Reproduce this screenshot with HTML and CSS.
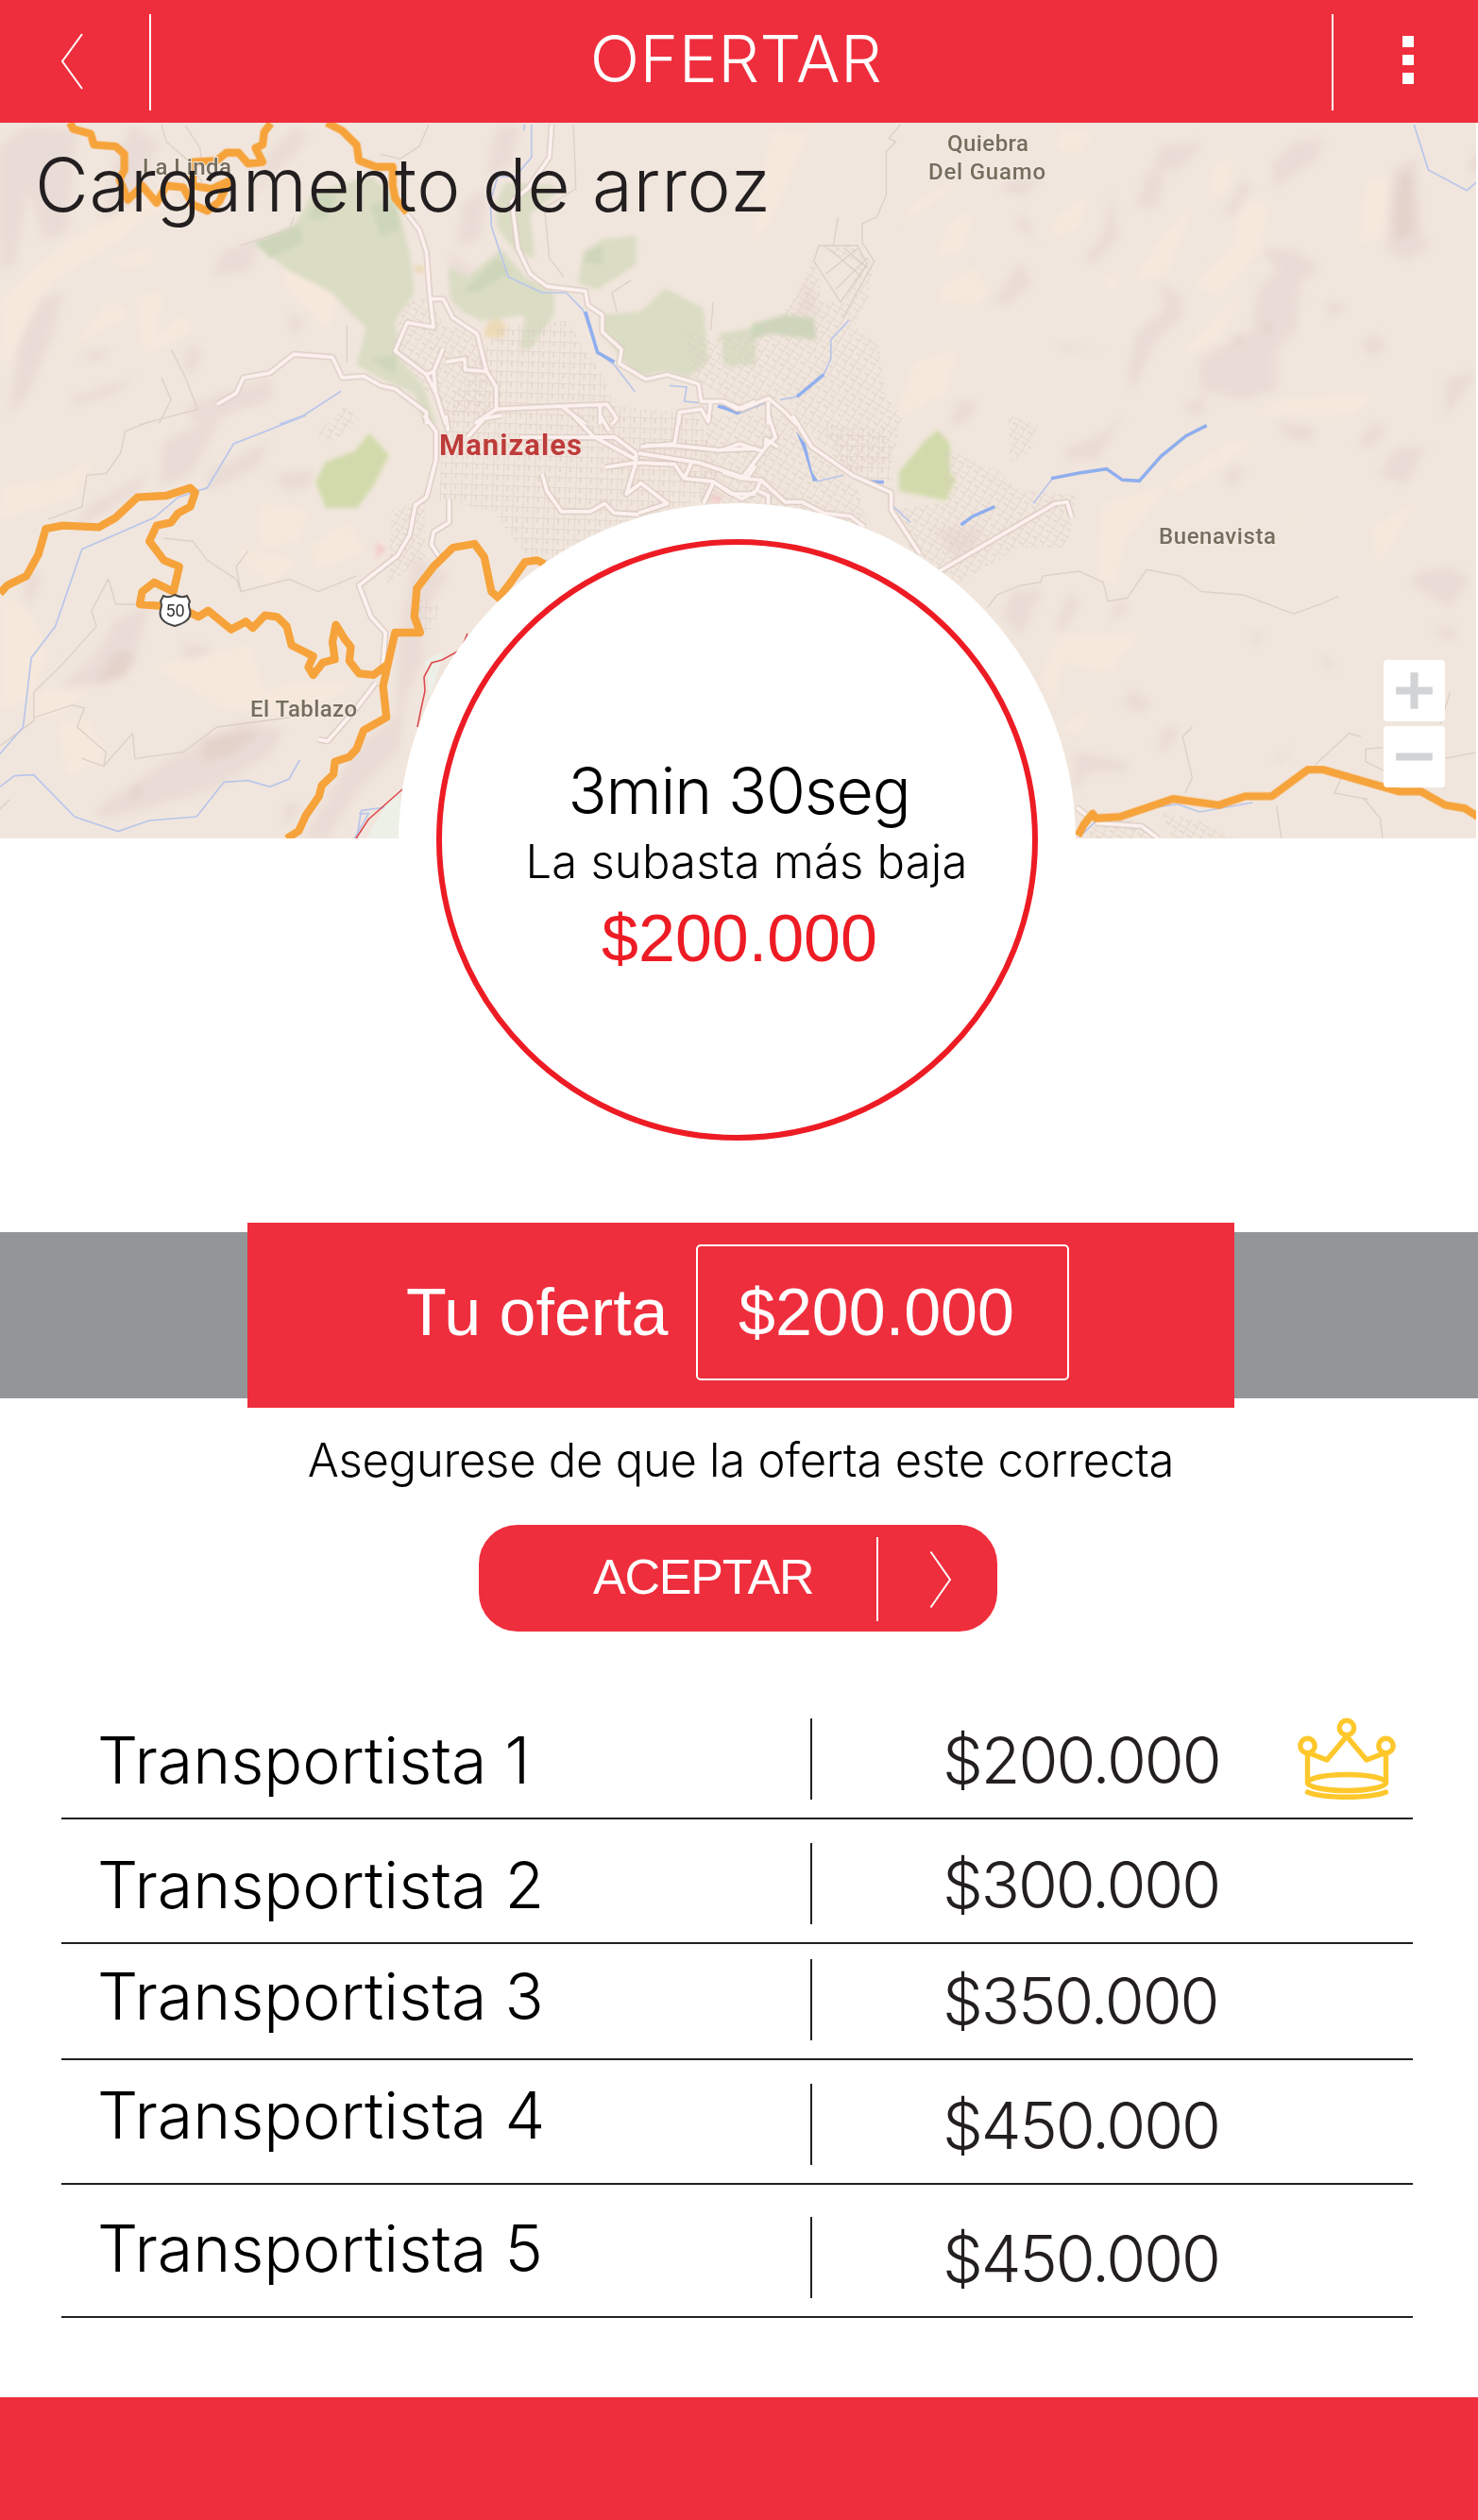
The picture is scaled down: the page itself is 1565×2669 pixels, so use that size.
FILE: index.html
```html
<!DOCTYPE html>
<html lang="es">
<head>
<meta charset="utf-8">
<title>Ofertar</title>
<link rel="stylesheet" href="styles.css">
</head>
<body>
<header class="topbar">
  <svg class="topbar-back" viewBox="0 0 26 62"><path d="M23 2 2 31 23 60"/></svg>
  <span class="topbar-rule"></span>
  <h1 class="topbar-title">OFERTAR</h1>
  <span class="topbar-rule"></span>
  <div class="topbar-menu"><i></i><i></i><i></i></div>
</header>

<section class="hero">
  <svg class="map" viewBox="0 130 1563 758" preserveAspectRatio="none">
    <defs>
      <pattern id="blocks" width="11" height="11" patternUnits="userSpaceOnUse" patternTransform="rotate(2)"><path d="M0 0H11M0 0V11M5 0V6" class="lane"/></pattern>
      <pattern id="lanes" width="9" height="13" patternUnits="userSpaceOnUse" patternTransform="rotate(32)"><path d="M0 0H9M0 0V13M4 6H9" class="lane"/></pattern>
      <filter id="soft" x="-20%" y="-20%" width="140%" height="140%"><feGaussianBlur stdDeviation="4"/></filter>
      <filter id="edge" x="-20%" y="-20%" width="140%" height="140%"><feGaussianBlur stdDeviation="2"/></filter>
    </defs>
    <rect y="130" width="1563" height="758" fill="#f1e6dd"/>
    <!-- terrain relief -->
    <g filter="url(#soft)">
      <g transform="scale(.5102 .33333)">
        <path class="rise" d="M0 460 60 400 160 420 140 740 90 760 60 600 30 850 0 850ZM80 950 130 930 110 1060 60 1250 20 1320 40 1080ZM270 400 330 450 250 740 210 740 230 560ZM620 400 640 440 540 600 520 640 560 480ZM460 800 540 760 520 860 440 880ZM150 1260 280 1200 240 1250 150 1290ZM390 1100 420 1110 400 1190 380 1170ZM160 1120 230 1110 200 1150ZM600 1000 630 1010 610 1080ZM390 1290 560 1200 570 1270 400 1350ZM960 650 1010 600 1000 760 950 780ZM1030 400 1080 400 1060 520 1010 560ZM930 800 980 860 960 1000Z"/>
        <path class="warm" d="M0 950 130 780 330 600 380 600 250 760 100 900 20 1150 0 1150ZM240 820 320 790 310 850 220 840ZM280 940 340 930 320 1080 380 1000 400 1050 300 1130ZM80 1180 180 1050 230 950 270 1000 150 1100ZM590 760 700 950 680 1050 590 900Z"/>
      </g>
      <g transform="translate(765) scale(.5102 .33333)">
        <path class="rise" d="M910 460 1000 455 950 540 890 545ZM880 545 920 560 900 660 860 660ZM1190 450 1250 440 1230 510 1180 560 1150 600 1140 520ZM1080 570 1100 590 1060 690 1040 680ZM810 610 820 760 770 840 750 820 790 740ZM620 670 650 760 610 720ZM620 830 640 900 590 970 560 960ZM1120 790 1190 795 1240 850 1200 900 1190 1050 1150 1110 1150 1240 1080 1270 990 1240 990 1140 1100 1050 1110 920 1150 860ZM910 900 950 940 955 1000 900 1080 850 1250 840 1190 860 1060 920 980ZM700 1090 790 1115 700 1110ZM1250 950 1300 980 1260 1010ZM1350 1055 1380 1100 1350 1140 1325 1100ZM1390 540 1440 500 1450 740 1470 780 1420 830 1380 800ZM1500 1200 1568 1180 1500 1330ZM490 1270 530 1280 500 1350 470 1350ZM180 880 200 1000 150 1000ZM960 1280 1000 1260 1000 1310 970 1320ZM590 570 660 560 630 620 580 610Z"/>
        <path class="peak" d="M1410 540 1430 560 1435 740 1400 765 1390 700ZM1060 1060 1085 1080 1065 1105ZM1130 1020 1145 1040 1120 1080ZM1568 470 1550 540 1568 540Z"/>
        <path class="warm" d="M700 410 770 420 740 490 690 470ZM370 690 430 610 500 570 440 640 380 700ZM480 690 520 680 500 800 440 815ZM690 690 760 620 740 720 690 760ZM920 740 980 640 920 880 850 890ZM1080 650 1130 640 1120 780 1030 950 980 900 1060 780ZM450 920 520 850 550 920 530 970 450 960ZM800 870 830 890 810 920 790 900ZM100 420 180 420 100 700 60 790ZM1340 560 1380 570 1370 740 1320 780ZM950 1120 1080 930 1030 1080 970 1120ZM400 1150 490 1110 460 1250 360 1330ZM1160 1270 1360 1250 1300 1320 1100 1320ZM1020 520 1060 500 1050 600 1010 640Z"/>
      </g>
      <g transform="translate(0 440) scale(.5102 .33333)">
        <path class="rise" d="M340 80 460 0 400 180 330 230ZM430 180 560 80 530 170 430 240ZM180 290 310 180 280 250 150 370ZM570 190 650 170 640 230 590 240ZM240 650 310 600 280 780 220 850 120 870 200 760ZM380 720 440 740 420 780 380 790ZM340 1100 510 970 590 1000 560 1080 440 1190 300 1250 210 1280 200 1250ZM860 450 930 500 880 640 880 770 840 900 830 1060 740 1200 680 1345 630 1345 740 1050 820 960 830 700ZM50 510 90 500 60 620ZM590 1230 630 1240 590 1310Z"/>
        <path class="peak" d="M240 750 280 760 260 830 200 850ZM420 1030 500 1000 540 1010 480 1080 420 1100ZM280 1170 300 1200 270 1230Z"/>
        <path class="warm" d="M0 230 120 200 200 140 150 260 0 330ZM540 280 640 300 620 400 540 420ZM480 420 620 460 560 540ZM320 800 520 730 550 900 430 900ZM90 870 190 870 110 960 60 950ZM420 920 620 850 740 850 620 960ZM0 560 60 620 100 760 60 900 0 940ZM120 980 180 960 220 1080 140 1150ZM640 420 720 340 760 430 660 490Z"/>
      </g>
      <g transform="translate(765 440) scale(.5102 .33333)">
        <path class="rise" d="M1150 20 1230 40 1220 90 1170 70ZM1350 20 1380 40 1340 110 1320 90ZM720 100 790 60 830 0 780 140 710 140ZM1060 160 1085 180 1060 225 1040 210ZM1400 100 1460 100 1420 220 1360 190ZM1440 500 1510 480 1550 520 1510 610 1430 540ZM1470 670 1530 680 1510 720ZM1100 680 1120 700 1100 735ZM1240 750 1270 790 1260 820ZM600 560 665 550 620 700 580 640ZM720 560 740 600 710 680 690 680ZM830 570 840 620 800 660ZM850 870 890 910 870 945 830 920ZM920 990 950 990 920 1080 900 1040ZM730 1070 840 1100 840 1130 760 1130 730 1200ZM1180 1060 1160 1100 1140 1100ZM440 360 540 350 520 440 480 450Z"/>
        <path class="warm" d="M790 280 930 220 830 400 820 540 780 520ZM700 700 870 690 800 820 700 780 690 930 660 830ZM1350 360 1440 270 1400 380 1360 480ZM930 210 1060 80 1100 90 940 250ZM700 1000 770 920 740 1010ZM1180 270 1200 360 1190 370Z"/>
      </g>
    </g>
    <!-- parks -->
    <g filter="url(#edge)">
      <g transform="scale(.5102 .33333)">
        <path class="park" d="M525 770 610 720 650 610 770 560 820 620 850 800 860 930 820 1020 830 1140 880 1230 905 1345 880 1345 860 1250 800 1210 740 1160 760 1040 730 1000 690 930 600 860ZM930 850 970 880 1040 790 1090 880 1150 930 1150 1000 1100 1110 1080 1110 1090 1000 1000 1020 960 990 935 950ZM1030 640 1050 580 1150 590 1150 620 1100 680 1110 820 1070 800 1030 720ZM1210 800 1250 760 1320 750 1320 840 1240 920 1200 900ZM1250 1000 1330 990 1380 915 1460 980 1470 1150 1430 1200 1380 1180 1320 1200 1280 1120 1250 1060ZM1490 1060 1568 1040 1568 1160 1520 1160Z"/>
        <path class="park-deep" d="M530 770 620 710 630 770 560 820ZM640 700 660 610 700 620 680 690ZM770 650 820 640 830 730 790 750ZM960 930 1030 820 1060 860 1000 920ZM1220 800 1250 780 1250 840 1210 830ZM770 1140 820 1130 820 1190Z"/>
        <path fill="#ecd9b6" d="M1010 1030 1030 1010 1050 1030 1045 1075 1005 1070ZM860 845 880 845 880 865 860 865Z"/>
      </g>
      <g transform="translate(765) scale(.5102 .33333)">
        <path class="park" d="M0 1060 30 1090 60 1090 50 1140 20 1170 0 1150Z"/>
        <path class="park-deep" d="M60 1030 130 1000 190 1010 195 1080 100 1060 60 1080Z"/>
      </g>
      <path class="park-bright" d="M391 459 412 482 395 515 378 538 345 538 334 510 345 489 375 478ZM952 500 978 468 993 455 1006 470 1006 500 1012 508 1002 530 952 520Z"/>
      <path fill="#f4cfca" d="M398 574 410 582 398 592ZM757 522 766 526 760 534 750 530Z"/>
    </g>
    <!-- city street mesh -->
    <path fill="url(#lanes)" d="M428 320 455 315 470 345 500 350 515 390 520 440 470 440 440 400 415 370ZM725 350 750 360 800 352 835 325 850 300 865 260 905 260 925 280 918 320 905 345 930 365 938 420 955 440 945 490 900 500 850 450 830 420 790 440 735 400ZM862 260 870 320 895 320 910 280ZM335 460 365 430 380 445 350 470ZM1068 440 1100 450 1090 480 1070 490ZM940 540 1090 520 1140 525 1130 580 1080 580 1010 620 975 600ZM1000 475 1060 500 1080 520 1000 545ZM750 440 830 440 910 520 920 570 880 560 740 530ZM1230 860 1270 870 1310 888 1240 888ZM1160 870 1200 868 1225 888 1150 888ZM415 540 450 530 450 590 410 620Z"/>
    <path fill="url(#blocks)" d="M470 440 530 345 600 340 640 400 650 430 740 440 760 500 740 530 640 560 580 600 560 590 520 540 465 530ZM870 450 940 455 945 510 900 505ZM440 635 465 640 460 665 445 670Z"/>
    <g class="trail">
      <path transform="scale(.5102 .33333)" d="M335 395 345 450 390 510 420 580M385 400 415 470 420 530M890 395 870 465 830 505 790 490M500 780 600 730 610 690M1190 395 1195 600 1130 660 1140 820 1170 880M355 1110 385 1200 410 1300 290 1350M720 1035 720 1150M335 1200 355 1270 330 1345M1310 890 1270 930 1280 990M1480 960 1475 1050"/>
      <path transform="translate(765) scale(.5102 .33333)" d="M370 395 345 440 360 450 340 480 340 620 320 690 290 710 290 770 315 830 250 1010M240 690 230 780M200 780 280 780 300 840 245 960 190 830ZM220 790 290 880M250 785 300 850M280 790 215 870M300 820 235 920"/>
      <path transform="translate(0 440) scale(.5102 .33333)" d="M310 20 260 50 250 120 220 185 180 190 170 290 100 330M340 390 400 400 430 460 490 520 500 560 600 520 660 560 740 510M515 430 490 480 500 560M225 520 240 600 330 600M225 520 190 620 200 670 130 790 70 880 70 970 0 1050M70 960 150 920 175 930 160 990 220 1070 215 1115 170 1090M215 1115 275 1010 280 1090 380 1070 450 990 600 960M0 1250 20 1220"/>
      <path transform="translate(765 440) scale(.5102 .33333)" d="M550 610 570 570 620 540 660 530 665 510 740 495 790 530 800 590 840 580 880 490 950 510 995 560 1080 570 1185 630 1240 600 1278 575M975 990 955 1020 975 1150 960 1200M1230 1110 1300 1010 1325 1020M1370 1055 1335 1060 1335 1100 1400 1150M1500 1090 1568 1070M1150 1240 1160 1345M1330 1215 1365 1280 1370 1345M1285 1150 1270 1200 1340 1220M1510 880 1490 980"/>
    </g>
    <g class="creek">
      <path transform="scale(.5102 .33333)" d="M1103 395 1103 500 1070 560 1033 560 1018 640 1020 720 1055 880 1125 930 1175 930 1210 985 1240 1120 1275 1160 1318 1245M1088 395V415M708 1243 630 1320 580 1348M1390 1225 1425 1230 1420 1275 1450 1280"/>
      <path transform="translate(765) scale(.5102 .33333)" d="M262 1018 225 1080 225 1140 210 1190 155 1260 120 1270M1435 395 1465 540 1545 605 1568 575"/>
      <path transform="translate(0 440) scale(.5102 .33333)" d="M635 0 485 90 430 230 370 260 320 325 170 425 115 670 65 770 48 990 0 1075M0 1180 30 1145 70 1142 155 1275 245 1322 310 1287 408 1275 465 1165 515 1160 560 1180 600 1155 622 1095M830 1240 750 1255 740 1345M745 1265 765 1265 735 1345"/>
      <path transform="translate(765 440) scale(.5102 .33333)" d="M645 280 685 200M355 290 390 340M195 210 250 190M900 1245 945 1235 990 1260 1100 1230M740 1340 775 1290"/>
    </g>
    <g class="river">
      <path transform="scale(.5102 .33333)" d="M1215 990 1240 1120 1275 1150M1490 1290 1530 1310 1568 1275"/>
      <path transform="translate(765) scale(.5102 .33333)" d="M0 1290 30 1312 90 1275M210 1190 155 1260"/>
      <path transform="translate(765 440) scale(.5102 .33333)" d="M305 210 335 212M495 348 520 320 565 290M682 200 740 183 797 170 830 205 865 208 910 130 962 65 1005 32"/>
    </g>
    <path fill="#8faeee" d="M843 457 853 470 860 500 866 509 861 510 851 477Z"/>
    <path fill="#edf0e6" d="M388 888 410 850 424 835 422 888ZM450 700 470 690 455 740Z"/>
    <path class="border-line" d="M495 671 488 688 468 699 457 702 449 717 450 732 446 750 442 770M426 836 390 868 377 888"/>
    <!-- local roads -->
    <g id="streets" class="road">
      <path transform="scale(.5102 .33333)" d="M845 680 870 730 885 800 892 940 900 1040 845 1025 820 1115 885 1190 905 1250 925 1348M892 950 920 950 940 1010 990 1060 1010 1180 1030 1230 1030 1300 985 1345M885 1190 900 1180 920 1105M900 1180 905 1250M925 1150 965 1140 965 1175 1010 1180M450 1285 490 1250 505 1200 560 1185 610 1125 690 1135 710 1200 755 1195 790 1225 820 1235 885 1310 885 1348M1145 395 1140 500 1095 600 1062 640 1075 790 1100 870 1135 910 1215 925 1220 970 1250 1000 1250 1055 1290 1110 1285 1155 1340 1205 1385 1190 1450 1220 1455 1275 1500 1275 1530 1300 1568 1275M1030 1300 1165 1290 1260 1285 1280 1330 1270 1348M1165 1290 1215 1348M1245 1290 1245 1348M1408 1348 1410 1310 1455 1300 1470 1340 1475 1275"/>
      <path transform="translate(765) scale(.5102 .33333)" d="M0 1275 40 1300 95 1265 130 1310 155 1350M95 1275 95 1350"/>
      <path transform="translate(0 440) scale(.5102 .33333)" d="M880 0 905 50 905 140 885 260 862 285 850 380 825 445 745 540 770 640 800 690 795 790M930 50 925 0M970 70 1005 10 1040 0M1080 70 1215 70 1275 68 1320 120 1320 150 1255 165M1190 0 1230 65 1320 140M1245 0 1265 50M1320 150 1400 155 1420 200 1480 210 1520 250 1568 250M1330 100 1400 90 1410 0M1340 95 1400 95 1490 110 1568 105M1325 120 1450 150 1550 200 1568 160M1435 150 1420 200M1320 150 1300 250 1330 215 1385 280 1325 310M1125 185 1135 240 1165 305 1225 305 1255 280 1275 310 1325 315M932 265 932 340 900 370 895 410 912 450M1480 215 1460 280M780 850 740 930 680 1035 660 1030M1470 0 1470 20"/>
      <path transform="translate(765 440) scale(.5102 .33333)" d="M145 0 185 100 270 190 350 245 350 300 410 440M95 0 110 70 90 100 40 200 80 205 130 275 165 275 210 310 265 320 295 355M0 110 35 90 85 115M90 100 90 75 115 100M0 180 40 200M80 205 70 240 40 265 0 230M75 240 95 255 95 285M450 495 690 280 715 275 725 325M735 1245 755 1270M775 1295 870 1305 905 1345"/>
    </g>
    <use href="#streets" class="road-fill"/>
    <!-- highways -->
    <g class="highway">
      <path transform="scale(.5102 .33333)" d="M145 390 152 410 188 425 195 460 240 465 258 490 258 540 248 570 265 635 295 590 325 645 345 590 380 595 400 650 430 670 455 640 475 575 440 600 400 590 400 515 450 510 470 485 495 485 515 520 545 515 530 470 545 460 548 420 562 392M678 390 710 415 740 460 745 510 780 530 815 530 815 590 820 630 845 675"/>
      <path transform="translate(0 440) scale(.5102 .33333)" d="M0 565 15 540 55 510 80 440 95 360 130 350 205 355 240 325 285 260 345 255 395 230 405 245 395 290 370 310 355 340 325 350 310 400 340 460 372 480 360 560 320 530 295 560 290 600 330 605 380 615 412 640 432 620 480 680 510 655 525 675 550 635 575 640 595 670 605 730 650 765 640 800 650 825 670 785 695 775 690 720 697 665 715 710 728 735 725 780 745 820 775 825 805 790 820 690 872 690 860 640 865 550 900 480 940 420 985 408 1005 450 1020 560 1035 580 1060 530 1090 465 1115 460 1130 472M805 790 795 860 802 960 755 1000 740 1060 725 1085 695 1100 692 1140 668 1175 662 1210 635 1270 620 1320 595 1345"/>
      <path transform="translate(765 440) scale(.5102 .33333)" d="M738 1335 750 1300 768 1265 775 1280 825 1275 935 1218 1030 1238 1085 1210 1140 1210 1215 1125 1245 1125 1405 1195 1450 1195 1500 1238 1540 1248 1568 1275"/>
    </g>
    <path class="shield" d="M173 631c4 2 9 1 12-1 4 2 9 3 13 1l3 6c-2 3-1 6 0 9 2 8-4 14-16 17-12-3-17-9-15-17 1-3 2-6 0-9Z"/>
    <text class="shield-text" x="185.500" y="653">50</text>
    <g class="place">
      <text x="151" y="185" textLength="94">La Linda</text>
      <text x="1003" y="159.500" textLength="86">Quiebra</text>
      <text x="983" y="189.500" textLength="124">Del Guamo</text>
      <text x="1227" y="576" textLength="124">Buenavista</text>
      <text x="265" y="758.500" textLength="113">El Tablazo</text>
    </g>
    <text class="city" x="465" y="482" textLength="151">Manizales</text>
  </svg>
  <h2 class="hero-title">Cargamento de arroz</h2>
  <div class="zoom">
    <button class="zoom-btn"><svg viewBox="0 0 64 64"><path d="M13 32H51M32 13V51"/></svg></button>
    <button class="zoom-btn"><svg viewBox="0 0 64 64"><path d="M13 32H51"/></svg></button>
  </div>
  <div class="halo">
    <div class="ring">
      <p class="timer">3min 30seg</p>
      <p class="timer-note">La subasta más baja</p>
      <p class="timer-price">$200.000</p>
    </div>
  </div>
</section>

<section class="bid">
  <div class="bid-panel">
    <span class="bid-label">Tu oferta</span>
    <span class="bid-field">$200.000</span>
  </div>
</section>
<p class="hint">Asegurese de que la oferta este correcta</p>
<button class="accept">
  <span class="accept-label">ACEPTAR</span>
  <span class="accept-rule"></span>
  <svg class="accept-arrow" viewBox="0 0 24 62"><path d="M1.500 1.500 22 31 1.500 60.500"/></svg>
</button>

<ul class="ranking">
  <li class="rank rank-1"><span class="rank-name">Transportista 1</span><i class="rank-rule"></i><span class="rank-price">$200.000</span>
    <svg class="crown" viewBox="0 0 104 88"><g><circle cx="52" cy="11" r="7.700"/><circle cx="10.500" cy="30" r="7.700"/><circle cx="93.500" cy="30" r="7.700"/><path d="M10.500 38V69M93.500 38V69M14 38.500 31 45 52 20 73 45 90 38.500"/><ellipse cx="52" cy="69" rx="41.500" ry="8.500"/><path d="M10.500 79C27 86 77 86 93.500 79"/></g></svg>
  </li>
  <li class="rank rank-2"><span class="rank-name">Transportista 2</span><i class="rank-rule"></i><span class="rank-price">$300.000</span></li>
  <li class="rank rank-3"><span class="rank-name">Transportista 3</span><i class="rank-rule"></i><span class="rank-price">$350.000</span></li>
  <li class="rank rank-4"><span class="rank-name">Transportista 4</span><i class="rank-rule"></i><span class="rank-price">$450.000</span></li>
  <li class="rank rank-5"><span class="rank-name">Transportista 5</span><i class="rank-rule"></i><span class="rank-price">$450.000</span></li>
</ul>
<footer class="bottombar"></footer>
</body>
</html>
```
FILE: styles.css
```css
* { box-sizing: border-box; margin: 0; padding: 0; }
body {
  width: 1565px;
  height: 2669px;
  display: flex;
  flex-direction: column;
  background: #fff;
  color: #000;
  font-family: Inter, "Liberation Sans", sans-serif;
  font-weight: 300;
  overflow: hidden;
}
svg { display: block; }
button { border: 0; font: inherit; color: inherit; }

.topbar {
  display: flex;
  flex: none;
  height: 130px;
  padding-left: 64px;
  background: #ef2e3d;
  color: #fff;
}
.topbar-back { width: 26px; height: 62px; margin: 34px 68px 0 0; }
.topbar-back path, .accept-arrow path { fill: none; stroke: #fff; stroke-width: 2; }
.topbar-rule { width: 2px; height: 102px; margin-top: 15px; background: #fff; }
.topbar-title {
  width: 1250px;
  padding-right: 11px;
  font-size: 69px;
  font-weight: 300;
  line-height: 124px;
  letter-spacing: 0.500px;
  text-align: center;
}
.topbar-menu { display: flex; flex-direction: column; gap: 8px; margin: 38px 0 0 73px; }
.topbar-menu i { width: 12px; height: 11.500px; background: #fff; }

.hero { position: relative; flex: none; height: 758px; }
.map { width: 1563px; height: 758px; }
.hero-title {
  position: absolute;
  left: 37px;
  top: 16px;
  color: #231f20;
  font-size: 78px;
  font-weight: 300;
  line-height: 100px;
  letter-spacing: 0.700px;
  white-space: nowrap;
}
.rise { fill: #e9dcd6; }
.peak { fill: #e3d2ca; }
.warm { fill: #f6e8db; }
.park { fill: #dadcc4; }
.park-deep { fill: #cdd6ba; }
.park-bright { fill: #d2daab; }
.lane { fill: none; stroke: #dccdc4; stroke-width: 1.100; }
.trail path { fill: none; stroke: #dccfc5; stroke-width: 1.300; vector-effect: non-scaling-stroke; }
.creek path { fill: none; stroke: #b9c6ea; stroke-width: 1.700; vector-effect: non-scaling-stroke; }
.river path { fill: none; stroke: #8faeee; stroke-width: 3.500; vector-effect: non-scaling-stroke; }
.border-line { fill: none; stroke: #dd4a4e; stroke-width: 1.600; }
.road path {
  fill: none;
  stroke: var(--road-color, #dac9c1);
  stroke-width: var(--road-width, 6.500px);
  stroke-linejoin: round;
  vector-effect: non-scaling-stroke;
}
.road-fill { --road-color: #fcf1ee; --road-width: 4px; }
.highway path { fill: none; stroke: #f6a33b; stroke-width: 8.300; vector-effect: non-scaling-stroke; stroke-linejoin: round; }
.shield { fill: #fff; stroke: #444; stroke-width: 2; }
.shield-text { font: 400 18px Roboto, sans-serif; fill: #333; text-anchor: middle; }
.place text { font: 500 24px Roboto, sans-serif; fill: #756e5e; stroke: #f4ebe3; stroke-width: 2; paint-order: stroke; }
.city { font: 700 31px Roboto, sans-serif; fill: #bd3c3a; stroke: #f4e4de; stroke-width: 2; paint-order: stroke; }

.zoom { position: absolute; left: 1465px; top: 569px; display: grid; gap: 5px; }
.zoom-btn { width: 65px; height: 65px; border-radius: 4px; background: #fff; }
.zoom-btn path { stroke: #d1d3d4; stroke-width: 8; }

.halo {
  position: absolute;
  left: 422px;
  top: 403px;
  width: 717px;
  height: 714px;
  padding: 38px 40px;
  border-radius: 50%;
  background: #fff;
}
.ring {
  width: 637px;
  height: 637px;
  padding-top: 220px;
  border: 6px solid #ed1c24;
  border-radius: 50%;
  text-align: center;
}
.timer { font-size: 68px; line-height: 80px; padding-left: 4px; letter-spacing: -1.200px; }
.timer-note { font-size: 49px; line-height: 72px; padding-left: 20px; letter-spacing: 0.200px; white-space: nowrap; }
.timer-price, .bid-panel, .accept-label { font-family: "Liberation Sans", Arial, sans-serif; font-weight: 400; }
.timer-price { margin-top: 2px; color: #ed1c24; font-size: 70px; line-height: 86px; padding-left: 5px; }

.bid {
  flex: none;
  height: 176px;
  margin-top: 417px;
  background: #939598;
}
.bid-panel {
  display: flex;
  align-items: center;
  width: 1045px;
  height: 196px;
  margin: -10px 0 0 262px;
  padding: 0 175px 0 168px;
  background: #ef2e3d;
  color: #fff;
  font-size: 70px;
  transform: translateY(0);
}
.bid-label { width: 307px; white-space: nowrap; line-height: 144px; padding-bottom: 7px; }
.bid-field {
  width: 395px;
  height: 144px;
  margin-bottom: 6px;
  padding-left: 43px;
  border: 2px solid #fff;
  border-radius: 5px;
  line-height: 140px;
}
.hint {
  margin-top: 28px;
  font-size: 49px;
  line-height: 76px;
  letter-spacing: -0.270px;
  text-align: center;
  white-space: nowrap;
  padding-left: 4px;
}
.accept {
  display: flex;
  flex: none;
  width: 549px;
  height: 113px;
  margin: 30px 0 0 507px;
  padding-left: 121px;
  border-radius: 41px;
  background: #ef2e3d;
  color: #fff;
}
.accept-label { width: 300px; font-size: 52px; line-height: 110px; letter-spacing: -1.200px; text-align: left; }
.accept-rule { width: 2px; height: 89px; margin-top: 13px; background: #fff; }
.accept-arrow { width: 24px; height: 62px; margin: 27px 0 0 54px; }

.ranking { margin: 72px 0 0 65px; width: 1431px; list-style: none; }
.rank { display: flex; align-items: flex-end; border-bottom: 2px solid #231f20; }
.rank-1 { height: 127px; }
.rank-2, .rank-4 { height: 132px; }
.rank-3 { height: 123px; }
.rank-5 { height: 141px; }
.rank-name { width: 793px; padding-left: 38px; margin-bottom: 21px; font-size: 68px; line-height: 80px; white-space: nowrap; }
.rank-3 .rank-name { margin-bottom: 26px; }
.rank-4 .rank-name, .rank-5 .rank-name { margin-bottom: 32px; }
.rank-rule { width: 2px; height: 86px; margin-bottom: 19px; background: #231f20; }
.rank-price { width: 448px; padding-left: 138px; margin-bottom: 21px; color: #231f20; font-size: 68px; line-height: 80px; letter-spacing: -2.100px; }
.crown { width: 104px; height: 88px; margin: 0 0 18px 66px; overflow: visible; }
.crown g { fill: none; stroke: #fec72b; stroke-width: 5.400; stroke-linecap: round; stroke-linejoin: round; }
.bottombar { flex: none; height: 130px; margin-top: auto; background: #ef2e3d; }
```
